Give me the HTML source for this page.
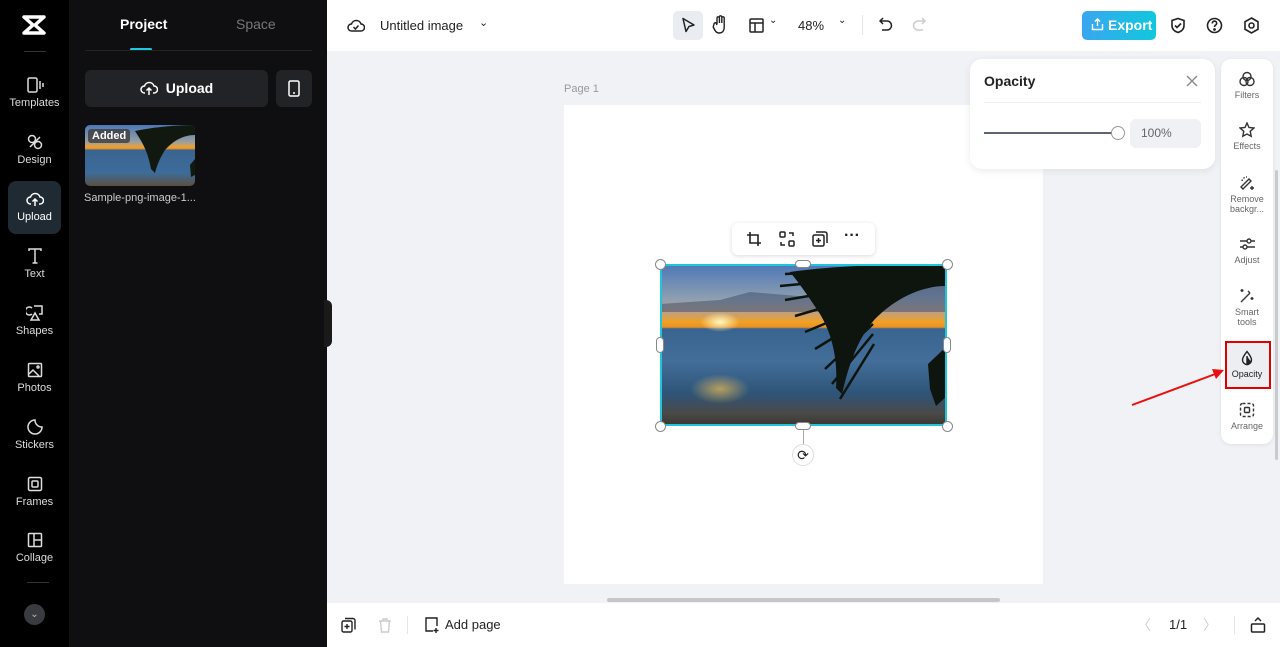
<!DOCTYPE html>
<html><head><meta charset="utf-8"><style>
*{box-sizing:border-box;margin:0;padding:0}
body{width:1280px;height:647px;overflow:hidden;font-family:"Liberation Sans",sans-serif;background:#f0f2f5;position:relative}
.abs{position:absolute}
.rail{left:0;top:0;width:69px;height:647px;background:#000}
.ri{position:absolute;left:0;width:69px;text-align:center;color:#ddd;font-size:11px}
.ri svg{display:block;margin:0 auto 3px}
.panel{left:69px;top:0;width:258px;height:647px;background:#0f0f11}
.top{left:327px;top:0;width:953px;height:51px;background:#fff}
.bot{left:327px;top:603px;width:953px;height:44px;background:#fff}
.tools{left:1221px;top:59px;width:52px;height:385px;background:#fff;border-radius:10px;box-shadow:0 1px 4px rgba(0,0,0,.08)}
.ti{position:absolute;left:0;width:52px;text-align:center;font-size:9px;color:#666;line-height:10px}
.ti svg{display:block;margin:0 auto 3px}
</style></head><body>
<div class="abs rail">
 <svg class="abs" style="left:22px;top:15px" width="24" height="20" viewBox="0 0 24 20"><path d="M2 2h20l-9 8 9 8H2l9-8z" fill="none" stroke="#fff" stroke-width="3.5" stroke-linejoin="round"/></svg>
 <div class="abs" style="left:24px;top:51px;width:22px;height:1px;background:#333"></div>
 <div class="ri" style="top:76px"><svg width="18" height="18" viewBox="0 0 18 18" fill="none" stroke="#ddd" stroke-width="1.5"><rect x="2" y="2" width="9" height="14" rx="1.5"/><path d="M14 5v8M17 7v4"/></svg>Templates</div>
 <div class="ri" style="top:133px"><svg width="18" height="18" viewBox="0 0 18 18" fill="none" stroke="#ddd" stroke-width="1.5"><circle cx="6" cy="6" r="3.5"/><circle cx="12" cy="12" r="3.5"/><path d="M4 14l10-10"/></svg>Design</div>
 <div class="abs" style="left:8px;top:181px;width:53px;height:53px;background:#1f2a33;border-radius:8px"></div>
 <div class="ri" style="top:190px;color:#fff"><svg width="18" height="18" viewBox="0 0 18 18" fill="none" stroke="#fff" stroke-width="1.5"><path d="M5 14H4.5a3.5 3.5 0 010-7 5 5 0 019.5 0 3.5 3.5 0 010 7H13M9 16V9M6.5 11.5L9 9l2.5 2.5"/></svg>Upload</div>
 <div class="ri" style="top:247px"><svg width="18" height="18" viewBox="0 0 18 18" fill="none" stroke="#ddd" stroke-width="1.5"><path d="M3 4V2h12v2M9 2v14M6.5 16h5"/></svg>Text</div>
 <div class="ri" style="top:304px"><svg width="18" height="18" viewBox="0 0 18 18" fill="none" stroke="#ddd" stroke-width="1.5"><path d="M6 4a4 4 0 100 6M8 2h8v8h-3M9 9l-4 7h8z"/></svg>Shapes</div>
 <div class="ri" style="top:361px"><svg width="18" height="18" viewBox="0 0 18 18" fill="none" stroke="#ddd" stroke-width="1.5"><rect x="2.5" y="2.5" width="13" height="13" rx="1"/><path d="M3 13l4-4 6 6"/><circle cx="12" cy="6" r="1"/></svg>Photos</div>
 <div class="ri" style="top:418px"><svg width="18" height="18" viewBox="0 0 18 18" fill="none" stroke="#ddd" stroke-width="1.5"><path d="M16 9a7 7 0 11-7-7c0 4 3 7 7 7z"/></svg>Stickers</div>
 <div class="ri" style="top:475px"><svg width="18" height="18" viewBox="0 0 18 18" fill="none" stroke="#ddd" stroke-width="1.5"><rect x="2.5" y="2.5" width="13" height="13" rx="1.5"/><rect x="6" y="6" width="6" height="6" rx="1"/></svg>Frames</div>
 <div class="ri" style="top:531px"><svg width="18" height="18" viewBox="0 0 18 18" fill="none" stroke="#ddd" stroke-width="1.5"><rect x="2.5" y="2.5" width="13" height="13" rx="1"/><path d="M8 2.5v13M8 9h7.5"/></svg>Collage</div>
 <div class="abs" style="left:27px;top:582px;width:22px;height:1px;background:#333"></div>
 <div class="abs" style="left:24px;top:604px;width:21px;height:21px;border-radius:50%;background:#3a3b40;color:#bbb;font-size:10px;text-align:center;line-height:21px">⌄</div>
</div>
<div class="abs panel">
 <div class="abs" style="left:51px;top:16px;color:#fff;font-weight:bold;font-size:14px">Project</div>
 <div class="abs" style="left:167px;top:16px;color:#777;font-size:14px">Space</div>
 <div class="abs" style="left:61px;top:48px;width:22px;height:3px;background:#1ec8e0;border-radius:2px"></div>
 <div class="abs" style="left:16px;top:50px;width:227px;height:1px;background:#222"></div>
 <div class="abs" style="left:16px;top:70px;width:183px;height:37px;background:#222327;border-radius:6px;color:#fff;font-weight:bold;font-size:14px;text-align:center;line-height:37px"><svg width="18" height="16" viewBox="0 0 18 16" style="vertical-align:-3px;margin-right:8px" fill="none" stroke="#fff" stroke-width="1.5"><path d="M5 13H4.5a3.5 3.5 0 010-7 5 5 0 019.5 0 3.5 3.5 0 010 7H13M9 15V8M6.5 10.5L9 8l2.5 2.5"/></svg>Upload</div>
 <div class="abs" style="left:207px;top:70px;width:36px;height:37px;background:#222327;border-radius:6px"><svg class="abs" style="left:11px;top:10px" width="14" height="17" viewBox="0 0 14 17" fill="none" stroke="#fff" stroke-width="1.5"><rect x="2" y="1" width="10" height="15" rx="1.5"/><path d="M6 13h2"/></svg></div>
 <div class="abs" style="left:16px;top:125px;width:110px;height:61px;border-radius:5px;overflow:hidden;background:linear-gradient(#4d77b8 0%,#9aa0a0 28%,#f0a030 36%,#e09030 39%,#3a6490 41%,#3d6c9a 78%,#5b5040 100%)"><svg width="110" height="61" viewBox="0 0 110 61" class="abs" style="left:0;top:0"><path d="M50 6C70 2 90 0 110 0v10C98 10 88 16 80 25 75 33 72 40 70 48L66 44C64 32 60 22 55 14z" fill="#101810"/><path d="M105 40L110 34V50L106 52z" fill="#101810"/></svg><div class="abs" style="left:3px;top:4px;background:rgba(60,60,60,.8);color:#fff;font-weight:bold;font-size:11px;padding:1px 4px;border-radius:3px">Added</div></div>
 <div class="abs" style="left:15px;top:192px;color:#ccc;font-size:11px">Sample-png-image-1...</div>
</div>
<div class="abs" style="left:324px;top:300px;width:8px;height:47px;background:#1a1a1a;border-radius:0 6px 6px 0"></div>
<div class="abs top">
 <svg class="abs" style="left:20px;top:17px" width="18" height="16" viewBox="0 0 18 16" fill="none" stroke="#222" stroke-width="1.5"><path d="M4.5 14a3.5 3.5 0 010-7 5 5 0 019.5 0 3.5 3.5 0 010 7z"/><path d="M6.5 10l2 2 3-3.5"/></svg>
 <div class="abs" style="left:53px;top:18px;font-size:13px;color:#222">Untitled image</div>
 <div class="abs" style="left:152px;top:16px;font-size:11px;color:#222">⌄</div>
 <div class="abs" style="left:346px;top:11px;width:30px;height:29px;background:#e9ecf0;border-radius:5px"></div>
 <svg class="abs" style="left:354px;top:17px" width="15" height="17" viewBox="0 0 15 17" fill="none" stroke="#222" stroke-width="1.5"><path d="M2 1.5l11 6.5-5 1.5-3 5z" stroke-linejoin="round"/></svg>
 <svg class="abs" style="left:385px;top:15px" width="16" height="19" viewBox="0 0 16 19" fill="none" stroke="#222" stroke-width="1.4"><path d="M5 9V3a1.2 1.2 0 012.4 0v5V2a1.2 1.2 0 012.4 0v6V3a1.2 1.2 0 012.4 0v9c0 4-2 6-5 6s-4-2-6-6L2 9a1.2 1.2 0 012-1l1 2"/></svg>
 <svg class="abs" style="left:422px;top:18px" width="15" height="15" viewBox="0 0 15 15" fill="none" stroke="#222" stroke-width="1.5"><rect x="1" y="1" width="13" height="13" rx="1"/><path d="M1 5h13M6 5v9"/></svg>
 <div class="abs" style="left:442px;top:15px;font-size:10px;color:#222">⌄</div>
 <div class="abs" style="left:471px;top:18px;font-size:13px;color:#222">48%</div>
 <div class="abs" style="left:511px;top:15px;font-size:10px;color:#222">⌄</div>
 <div class="abs" style="left:535px;top:15px;width:1px;height:20px;background:#e5e5e5"></div>
 <svg class="abs" style="left:552px;top:17px" width="14" height="16" viewBox="0 0 14 16" fill="none" stroke="#222" stroke-width="1.5"><path d="M4 1L1 4l3 3M1 4h7a4.5 4.5 0 010 9H3"/></svg>
 <svg class="abs" style="left:585px;top:17px" width="14" height="16" viewBox="0 0 14 16" fill="none" stroke="#ccc" stroke-width="1.5"><path d="M10 1l3 3-3 3M13 4H6a4.5 4.5 0 000 9h5"/></svg>
 <div class="abs" style="left:755px;top:11px;width:74px;height:29px;border-radius:5px;background:linear-gradient(90deg,#3aa6f0,#10c8dc);color:#fff;font-weight:bold;font-size:14px;line-height:29px;padding-left:26px">Export</div>
 <svg class="abs" style="left:764px;top:18px" width="13" height="13" viewBox="0 0 13 13" fill="none" stroke="#fff" stroke-width="1.4"><path d="M6.5 8V1M4 3.5l2.5-2.5 2.5 2.5M1.5 6v5.5h10V6"/></svg>
 <svg class="abs" style="left:843px;top:17px" width="16" height="17" viewBox="0 0 16 17" fill="none" stroke="#222" stroke-width="1.6"><path d="M8 1.5l6 2v5c0 4-3 6-6 7-3-1-6-3-6-7v-5z"/><path d="M5 8.5l2 2 4-4"/></svg>
 <svg class="abs" style="left:879px;top:17px" width="17" height="17" viewBox="0 0 17 17" fill="none" stroke="#222" stroke-width="1.6"><circle cx="8.5" cy="8.5" r="7"/><path d="M6.3 6.5a2.2 2.2 0 114 1c-1 .7-1.8 1-1.8 2.5"/><circle cx="8.5" cy="12.5" r=".6" fill="#222"/></svg>
 <svg class="abs" style="left:916px;top:17px" width="17" height="17" viewBox="0 0 17 17" fill="none" stroke="#222" stroke-width="1.6"><path d="M8.5 1l6.5 3.75v7.5L8.5 16 2 12.25v-7.5z"/><circle cx="8.5" cy="8.5" r="2.5"/></svg>
</div>
<div class="abs" style="left:564px;top:83px;font-size:11px;color:#999">Page 1</div>
<div class="abs" style="left:564px;top:105px;width:479px;height:479px;background:#fff"></div>
<div class="abs" style="left:732px;top:223px;width:143px;height:32px;background:#fff;border-radius:6px;box-shadow:0 1px 5px rgba(0,0,0,.15)">
 <svg class="abs" style="left:14px;top:8px" width="16" height="16" viewBox="0 0 16 16" fill="none" stroke="#222" stroke-width="1.6"><path d="M4 1v11h11M1 4h11v11"/></svg>
 <svg class="abs" style="left:47px;top:8px" width="16" height="16" viewBox="0 0 16 16" fill="none" stroke="#222" stroke-width="1.5"><rect x="1" y="1" width="5" height="5" rx="1"/><rect x="10" y="10" width="5" height="5" rx="1"/><path d="M10 2h4v3M6 14H2v-3"/></svg>
 <svg class="abs" style="left:80px;top:8px" width="16" height="16" viewBox="0 0 16 16" fill="none" stroke="#222" stroke-width="1.5"><rect x="1" y="4" width="11" height="11" rx="1.5"/><path d="M4 1h9a2 2 0 012 2v9M6.5 7v5M4 9.5h5"/></svg>
 <div class="abs" style="left:112px;top:4px;font-size:16px;font-weight:bold;color:#222">···</div>
</div>
<div class="abs" style="left:660px;top:264px;width:287px;height:162px;overflow:hidden;background:linear-gradient(#4d77b8 0%,#8fa0b0 22%,#c0a080 30%,#f2a020 36%,#e89028 39%,#3a6490 40%,#436e9a 60%,#2e5478 80%,#4a4a48 92%,#3a3630 100%)">
 <div class="abs" style="left:40px;top:48px;width:40px;height:20px;border-radius:50%;background:radial-gradient(#fff8c0,rgba(255,200,60,0) 70%)"></div>
 <div class="abs" style="left:30px;top:110px;width:60px;height:30px;background:radial-gradient(rgba(240,190,80,.7),rgba(0,0,0,0) 70%)"></div>
 <svg class="abs" style="left:0;top:0" width="287" height="162" viewBox="0 0 287 162"><path d="M0 40L60 36 90 28 150 33 200 30 287 22V48H0z" fill="#3b4a6a" opacity=".5"/>
 <path d="M130 8C170 2 230 0 287 0v22C260 22 235 35 215 55 200 72 190 95 182 130L176 124C178 95 172 70 160 50 150 35 140 20 130 8z" fill="#0e140e"/>
 <g stroke="#0e140e" stroke-width="2.5" fill="none"><path d="M200 6L125 10M205 14L120 22M208 22L125 36M210 30L135 52M212 40L145 68M212 50L155 85M213 60L165 105M213 70L172 120M214 80L180 135"/></g>
 <path d="M268 100L287 82V132L276 142 270 125z" fill="#0e140e"/></svg>
</div>
<div class="abs" style="left:660px;top:264px;width:287px;height:162px;border:2px solid #20c5dc"></div>
<div class="abs" style="left:655px;top:259px;width:11px;height:11px;border-radius:50%;background:#fff;border:1px solid #888"></div>
<div class="abs" style="left:942px;top:259px;width:11px;height:11px;border-radius:50%;background:#fff;border:1px solid #888"></div>
<div class="abs" style="left:655px;top:421px;width:11px;height:11px;border-radius:50%;background:#fff;border:1px solid #888"></div>
<div class="abs" style="left:942px;top:421px;width:11px;height:11px;border-radius:50%;background:#fff;border:1px solid #888"></div>
<div class="abs" style="left:795px;top:260px;width:16px;height:8px;border-radius:4px;background:#fff;border:1px solid #888"></div>
<div class="abs" style="left:795px;top:422px;width:16px;height:8px;border-radius:4px;background:#fff;border:1px solid #888"></div>
<div class="abs" style="left:656px;top:337px;width:8px;height:16px;border-radius:4px;background:#fff;border:1px solid #888"></div>
<div class="abs" style="left:943px;top:337px;width:8px;height:16px;border-radius:4px;background:#fff;border:1px solid #888"></div>
<div class="abs" style="left:803px;top:430px;width:1px;height:14px;background:#aaa"></div>
<div class="abs" style="left:792px;top:444px;width:22px;height:22px;border-radius:50%;background:#fff;border:1px solid #ddd;font-size:14px;text-align:center;line-height:20px;color:#222">⟳</div>
<div class="abs" style="left:970px;top:59px;width:245px;height:110px;background:#fff;border-radius:12px;box-shadow:0 2px 8px rgba(0,0,0,.08)">
 <div class="abs" style="left:14px;top:14px;font-weight:bold;font-size:14px;color:#222">Opacity</div>
 <svg class="abs" style="left:216px;top:16px" width="12" height="12" viewBox="0 0 12 12" stroke="#888" stroke-width="1.3"><path d="M1 1l10 10M11 1L1 11"/></svg>
 <div class="abs" style="left:14px;top:43px;width:217px;height:1px;background:#eee"></div>
 <div class="abs" style="left:14px;top:73px;width:135px;height:2px;background:#5b6470"></div>
 <div class="abs" style="left:141px;top:67px;width:14px;height:14px;border-radius:50%;background:#fff;border:1px solid #999"></div>
 <div class="abs" style="left:160px;top:60px;width:71px;height:29px;background:#eff1f4;border-radius:6px;font-size:12px;color:#666;line-height:29px;padding-left:11px">100%</div>
</div>
<div class="abs tools">
 <div class="ti" style="top:12px"><svg width="16" height="16" viewBox="0 0 16 16" fill="none" stroke="#333" stroke-width="1.4"><circle cx="8" cy="5.5" r="4"/><circle cx="5" cy="10.5" r="4"/><circle cx="11" cy="10.5" r="4"/></svg>Filters</div>
 <div class="ti" style="top:63px"><svg width="16" height="16" viewBox="0 0 16 16" fill="none" stroke="#333" stroke-width="1.4"><path d="M8 1l2 4.5 5 .5-3.8 3.3 1 5L8 12l-4.2 2.3 1-5L1 6l5-.5z"/></svg>Effects</div>
 <div class="ti" style="top:116px"><svg width="16" height="16" viewBox="0 0 16 16" fill="none" stroke="#333" stroke-width="1.4"><path d="M4 14l8-8-2-2-8 8z"/><path d="M13 11v4M11 13h4" /><path d="M3 6a5 5 0 015-4" stroke-dasharray="1.5 1.5"/></svg>Remove<br>backgr...</div>
 <div class="ti" style="top:177px"><svg width="16" height="16" viewBox="0 0 16 16" fill="none" stroke="#333" stroke-width="1.4"><path d="M1 5h15M1 11h15"/><circle cx="10" cy="5" r="2" fill="#fff"/><circle cx="6" cy="11" r="2" fill="#fff"/></svg>Adjust</div>
 <div class="ti" style="top:229px"><svg width="16" height="16" viewBox="0 0 16 16" fill="none" stroke="#333" stroke-width="1.4"><path d="M2 14l9-9M9 3l2 2M3 1v3M1.5 2.5h3M13 9v3M11.5 10.5h3"/></svg>Smart<br>tools</div>
 <div class="abs" style="left:4px;top:282px;width:46px;height:48px;background:#eceef1;border:2px solid #e00000"></div>
 <div class="ti" style="top:291px;color:#222"><svg width="16" height="16" viewBox="0 0 16 16" fill="none" stroke="#222" stroke-width="1.4"><path d="M8 1.5C6 4 3.5 7 3.5 10a4.5 4.5 0 009 0C12.5 7 10 4 8 1.5z"/><path d="M8 6v8.5c2 0 3-1.5 3-4" fill="#222"/></svg>Opacity</div>
 <div class="ti" style="top:343px"><svg width="16" height="16" viewBox="0 0 16 16" fill="none" stroke="#333" stroke-width="1.4"><rect x="1.5" y="1.5" width="13" height="13" rx="2" stroke-dasharray="3 2"/><rect x="5.5" y="5.5" width="5" height="5" rx="1"/></svg>Arrange</div>
</div>
<div class="abs" style="left:1275px;top:170px;width:3px;height:290px;background:#c8cacd;border-radius:2px"></div>
<svg class="abs" style="left:1130px;top:365px" width="95" height="42" viewBox="0 0 95 42"><path d="M2 40L88 8" stroke="#e81010" stroke-width="2"/><path d="M94 5L82 4 86 14z" fill="#e81010"/></svg>
<div class="abs" style="left:607px;top:598px;width:393px;height:4px;background:#c4c6c9;border-radius:2px"></div>
<div class="abs bot">
 <svg class="abs" style="left:14px;top:14px" width="15" height="16" viewBox="0 0 15 16" fill="none" stroke="#222" stroke-width="1.4"><rect x="1" y="4" width="10" height="11" rx="1.5"/><path d="M4 1.5h8a2 2 0 012 2v9M6 7v5M3.5 9.5h5"/></svg>
 <svg class="abs" style="left:51px;top:15px" width="14" height="15" viewBox="0 0 14 15" fill="none" stroke="#ccc" stroke-width="1.4"><path d="M1 3h12M5 3V1h4v2M2.5 3l1 11h7l1-11"/></svg>
 <div class="abs" style="left:80px;top:13px;width:1px;height:18px;background:#e5e5e5"></div>
 <svg class="abs" style="left:97px;top:14px" width="16" height="17" viewBox="0 0 16 17" fill="none" stroke="#222" stroke-width="1.4"><path d="M9 14H2V1h11v8M12 11v5M9.5 13.5h5"/></svg>
 <div class="abs" style="left:118px;top:14px;font-size:13px;color:#222">Add page</div>
 <div class="abs" style="left:810px;top:12px;font-size:14px;color:#ccc">〈</div>
 <div class="abs" style="left:842px;top:14px;font-size:13px;color:#222">1/1</div>
 <div class="abs" style="left:876px;top:12px;font-size:14px;color:#ccc">〉</div>
 <div class="abs" style="left:907px;top:13px;width:1px;height:18px;background:#e5e5e5"></div>
 <svg class="abs" style="left:923px;top:13px" width="16" height="18" viewBox="0 0 16 18" fill="none" stroke="#222" stroke-width="1.5"><rect x="1.5" y="8" width="13" height="8" rx="1"/><path d="M5 5l3-3 3 3"/></svg>
</div>
</body></html>
